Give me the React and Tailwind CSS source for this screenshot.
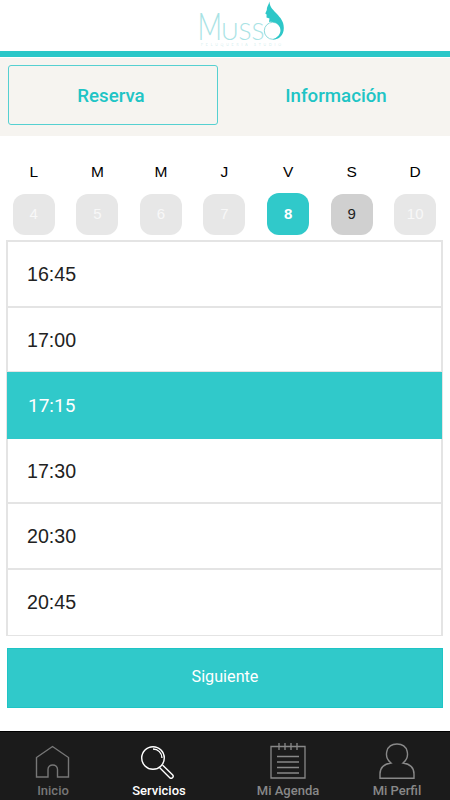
const days = [
  { letter: 'L', number: 4, state: 'disabled' },
  { letter: 'M', number: 5, state: 'disabled' },
  { letter: 'M', number: 6, state: 'disabled' },
  { letter: 'J', number: 7, state: 'disabled' },
  { letter: 'V', number: 8, state: 'selected' },
  { letter: 'S', number: 9, state: 'available' },
  { letter: 'D', number: 10, state: 'disabled' },
];

const dayStyles = {
  disabled: 'h-[41px] bg-[#e7e7e7] text-[#f8f8f8]',
  selected: 'h-[42px] bg-[#30c9ca] text-white font-bold -mt-px',
  available: 'h-[41px] bg-[#d0d0d0] text-[#222]',
};

const times = ['16:45', '17:00', '17:15', '17:30', '20:30', '20:45'];
const selectedTime = '17:15';

function Logo() {
  return (
    <svg className="ml-[198px] h-[51px] w-[90px]" viewBox="198 0 90 51" fill="none">
      <g fill="#a9e3e5" fontFamily="Lato, sans-serif" fontWeight="300">
        <text x="197.500" y="39.500" fontSize="38" textLength="24.500" lengthAdjust="spacingAndGlyphs">M</text>
        <text x="221" y="39.500" fontSize="23.500" textLength="43.500" lengthAdjust="spacingAndGlyphs">USS</text>
        <text x="201" y="45.500" fontSize="3.500" textLength="80" fill="#b5e4e4">PELUQUERIA STUDIO</text>
      </g>
      <circle cx="272.800" cy="30.800" r="8.500" stroke="#8fdadb" />
      <path
        d="M269.500 1.500 C268.500 5 266.500 7 266.800 10 L265.300 13.500 L266.600 14.500 L266.500 17.500 L269.500 18.500 L269 22 C275 21 280 25 280.500 29.500 C281 34 277 38 272.500 39.500 C278 40 283.800 36 283.800 28 C283.800 21 280 17.500 277 14 C274 10.500 269.500 7.500 269.500 1.500Z"
        fill="#2ec7c8"
      />
    </svg>
  );
}

function HomeIcon() {
  return (
    <svg className="h-9 w-9" viewBox="0 0 36 36" fill="none" stroke="currentColor" strokeWidth="1.4">
      <path d="M1.500 14.500 L17.500 3.500 L33.500 14.500 V34 H22.500 V26.500 C22.500 20.500 13 20.500 13 26.500 V34 H1.500 Z" />
    </svg>
  );
}

function SearchIcon() {
  return (
    <svg className="h-9 w-9" viewBox="0 0 36 36" fill="none" stroke="currentColor" strokeWidth="1.4">
      <circle cx="12" cy="15" r="11.300" />
      <path d="M12 6 C17 6 21 10 21 15 M18.500 24.500 L28.500 34.500 C30.500 36.500 33.500 34 31.500 31.700 L21.500 22" />
    </svg>
  );
}

function AgendaIcon() {
  return (
    <svg className="h-9 w-9" viewBox="0 0 36 36" fill="none" stroke="currentColor" strokeWidth="1.3">
      <path d="M1 3.500 H35 V35 H1 Z M9 0 V7 M15 0 V7 M21 0 V7 M27 0 V7" />
      <path d="M7 13.500 H29 M7 19 H29 M7 24.500 H29 M7 30 H29" strokeWidth="1.6" />
    </svg>
  );
}

function ProfileIcon() {
  return (
    <svg className="h-9 w-9" viewBox="0 0 36 36" fill="none" stroke="currentColor" strokeWidth="1.4">
      <path d="M12 20 C4.500 14 6.500 1 18 1 C29.500 1 31.500 14 24 20 C31 21 35 25 35 31 V35.200 H1 V31 C1 25 5 21 12 20 Z" />
    </svg>
  );
}

const navItems = [
  { label: 'Inicio', Icon: HomeIcon, className: 'w-[106px] text-[#777]' },
  { label: 'Servicios', Icon: SearchIcon, className: 'w-[106px] text-white' },
  { label: 'Mi Agenda', Icon: AgendaIcon, className: 'w-[152px] text-[#888]' },
  { label: 'Mi Perfil', Icon: ProfileIcon, className: 'w-[66px] text-[#888]' },
];

export default function App() {
  return (
    <div className="flex h-[800px] w-[450px] flex-col overflow-hidden bg-white font-['Roboto',sans-serif]">
      <header className="h-[57px] shrink-0 border-b-[6px] border-[#2bc7c8]">
        <Logo />
      </header>

      {/* Tabs */}
      <div className="mt-px flex h-[78px] shrink-0 bg-[#f6f4f0] pt-[7px] pl-2 text-[18.7px] font-medium text-[#20c4c5]">
        <button className="h-[60px] w-[210px] shrink-0 rounded-[3px] border border-[#55d0d1] pt-[3px] pr-1">Reserva</button>
        <button className="h-[60px] flex-1 pt-[3px] pl-1">Información</button>
      </div>

      {/* Week */}
      <div className="mt-[24px] ml-[2px] grid h-[80px] w-[445px] shrink-0 grid-cols-7 font-['Liberation_Sans',sans-serif]">
        {days.map(({ letter, number, state }) => (
          <div key={number} className="flex flex-col items-center">
            <span className="h-[34px] text-[15.5px] leading-[23px] text-black">{letter}</span>
            <span className={`flex w-[42px] items-center justify-center rounded-[12px] text-[15px] ${dayStyles[state]}`}>
              {number}
            </span>
          </div>
        ))}
      </div>

      {/* Available hours */}
      <ul className="ml-[6px] grid h-[396px] w-[437px] shrink-0 grid-rows-6 border-2 border-b border-[#e4e4e4] font-['Liberation_Sans',sans-serif] text-[19.6px] text-[#222]">
        {times.map((time) => (
          <li
            key={time}
            className={
              time === selectedTime
                ? "-mx-px -mt-px flex items-center bg-[#30c9ca] pt-0.5 pl-[21px] font-['Roboto',sans-serif] text-[19px] text-white"
                : 'flex items-center border-b-2 border-[#e4e4e4] pt-0.5 pl-[19px] last:border-b-0 last:pt-0'
            }
          >
            {time}
          </li>
        ))}
      </ul>

      <button className="mt-3 ml-[7px] h-[60px] w-[436px] shrink-0 border border-[#1fc4c5] bg-[#30c9ca] pb-px text-[16.2px] text-white">
        Siguiente
      </button>

      {/* Bottom navigation */}
      <nav className="mt-[23px] flex h-[69px] shrink-0 border-t border-black bg-[#1b1b1b] pt-[11px]">
        {navItems.map(({ label, Icon, className }) => (
          <a key={label} className={`flex flex-col items-center ${className}`}>
            <Icon />
            <span className="mt-[3px] text-[13px] leading-[18px] font-medium whitespace-nowrap">{label}</span>
          </a>
        ))}
      </nav>
    </div>
  );
}
